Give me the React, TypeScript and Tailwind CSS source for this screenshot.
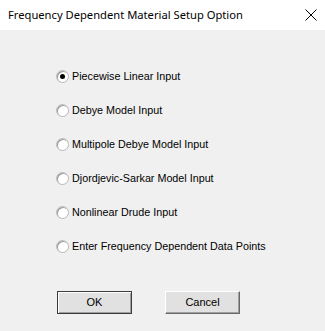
import { useState } from "react";

const options = [
  "Piecewise Linear Input",
  "Debye Model Input",
  "Multipole Debye Model Input",
  "Djordjevic-Sarkar Model Input",
  "Nonlinear Drude Input",
  "Enter Frequency Dependent Data Points",
];

export default function App() {
  const [selected, setSelected] = useState(0);

  return (
    <div className="w-[325px] h-[331px] bg-[#f0f0f0] flex flex-col overflow-hidden">
      <div className="h-[30px] bg-white flex items-center justify-between pl-2 pr-[7px] shrink-0">
        <span className="text-[11.2px] text-black" style={{ fontFamily: '"Noto Sans", "Open Sans", sans-serif' }}>
          Frequency Dependent Material Setup Option
        </span>
        <svg width="12" height="12" viewBox="0 0 12 12" className="mr-[1px]">
          <path d="M0.5 0.5 L11.5 11.5 M11.5 0.5 L0.5 11.5" stroke="#000" strokeWidth="1" fill="none" />
        </svg>
      </div>

      <div
        className="flex flex-col pt-[29px] pl-[56px] text-[10.75px] text-black"
        style={{ fontFamily: '"Liberation Sans", Arial, sans-serif' }}
      >
        {options.map((label, i) => (
          <div
            key={label}
            className="h-[34px] flex items-center gap-[3px] cursor-default"
            onClick={() => setSelected(i)}
          >
            <span className="w-[13px] h-[13px] rounded-full border border-[#b8b8b8] bg-white flex items-center justify-center shadow-[inset_1px_1px_0_#9a9a9a]">
              {selected === i && <span className="w-[5px] h-[5px] rounded-full bg-black" />}
            </span>
            <span>{label}</span>
          </div>
        ))}
      </div>

      <div
        className="flex gap-[33px] pl-[57px] mt-[28px] text-[11px] text-black"
        style={{ fontFamily: '"Liberation Sans", Arial, sans-serif' }}
      >
        <button className="w-[75px] h-[23px] bg-[#e1e1e1] border border-[#3c3c3c] shadow-[inset_1px_1px_0_#fff,inset_-1px_-1px_0_#a0a0a0]">
          OK
        </button>
        <button className="w-[75px] h-[23px] bg-[#e1e1e1] border border-t-white border-l-white border-r-[#696969] border-b-[#696969] shadow-[inset_-1px_-1px_0_#a0a0a0]">
          Cancel
        </button>
      </div>
    </div>
  );
}
